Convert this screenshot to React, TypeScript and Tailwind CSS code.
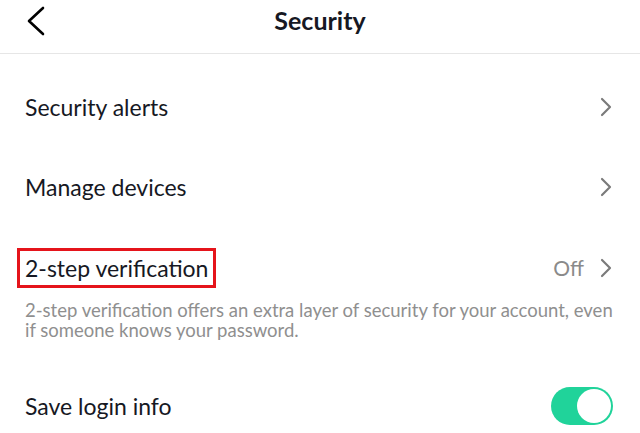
import { ChevronRight } from "lucide-react"

function Chevron() {
  return <ChevronRight className="h-[32px] w-[32px] text-[#7a7a7a]" strokeWidth={1.6} />
}

function Row({ label }: { label: string }) {
  return (
    <div className="flex h-[80px] items-center justify-between pl-[25px] pr-[18px]">
      <span className="text-[23px] text-[#161823]">{label}</span>
      <Chevron />
    </div>
  )
}

export default function App() {
  return (
    <div className="h-[433px] w-[640px] overflow-hidden bg-white font-['Lato',sans-serif]">
      <header className="relative flex h-[54px] justify-center border-b border-[#e6e6e6] pt-[4px]">
        <svg className="absolute left-[24px] top-[4px]" width="24" height="34" viewBox="0 0 24 34" fill="none">
          <polyline points="19,4 5,17 19,30" stroke="#000" strokeWidth="2.6" strokeLinecap="round" strokeLinejoin="round" />
        </svg>
        <h1 className="text-[25px] font-bold leading-[32px] text-[#161823]">Security</h1>
      </header>
      <div className="pt-[13px]">
        <Row label="Security alerts" />
        <Row label="Manage devices" />
        <div className="flex h-[68px] items-center justify-between pl-[17px] pr-[18px] pt-[14px]">
          <span className="border-[3px] border-[#e5141b] px-[5px] py-[2px] text-[23px] leading-[30px] text-[#161823]">
            2-step verification
          </span>
          <div className="flex items-center gap-[6px]">
            <span className="text-[21px] text-[#8a8a8a]">Off</span>
            <Chevron />
          </div>
        </div>
        <p className="pl-[25px] pr-[18px] pt-[5px] text-[18.5px] leading-[20px] text-[#8f8f8f]">
          2-step verification offers an extra layer of security for your account, even if someone knows your password.
        </p>
        <div className="mt-[26px] flex h-[80px] items-center justify-between pl-[25px] pr-[27px]">
          <span className="text-[23px] text-[#161823]">Save login info</span>
          <div className="flex h-[38px] w-[62px] items-center justify-end rounded-full bg-[#20d39a] p-[2px]">
            <div className="h-[34px] w-[34px] rounded-full bg-white" />
          </div>
        </div>
      </div>
    </div>
  )
}
